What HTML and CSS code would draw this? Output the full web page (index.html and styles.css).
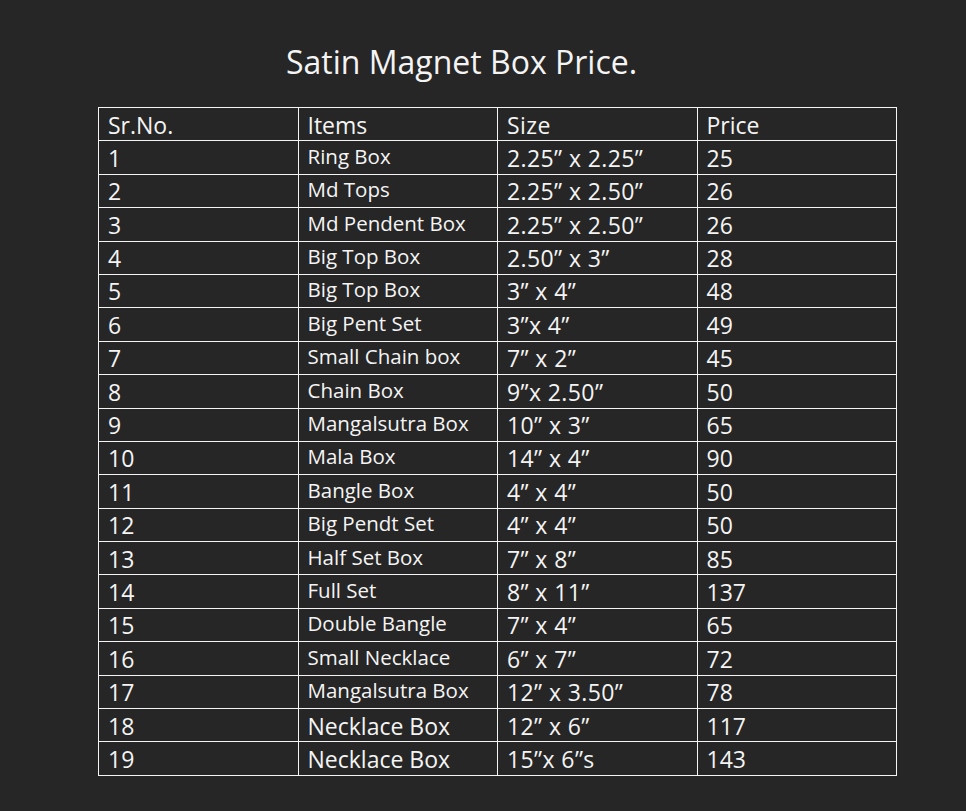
FILE: index.html
```html
<!DOCTYPE html>
<html>
<head>
<meta charset="utf-8">
<link rel="stylesheet" href="styles.css">
</head>
<body>
<h1 class="title">Satin Magnet Box Price.</h1>
<table class="price-table">
  <tr><td>Sr.No.</td><td>Items</td><td class="size">Size</td><td>Price</td></tr>
  <tr><td>1</td><td class="sm">Ring Box</td><td class="size">2.25” x 2.25”</td><td>25</td></tr>
  <tr><td>2</td><td class="sm">Md Tops</td><td class="size">2.25” x 2.50”</td><td>26</td></tr>
  <tr><td>3</td><td class="sm">Md Pendent Box</td><td class="size">2.25” x 2.50”</td><td>26</td></tr>
  <tr><td>4</td><td class="sm">Big Top Box</td><td class="size">2.50” x 3”</td><td>28</td></tr>
  <tr><td>5</td><td class="sm">Big Top Box</td><td class="size">3” x 4”</td><td>48</td></tr>
  <tr><td>6</td><td class="sm">Big Pent Set</td><td class="size">3”x 4”</td><td>49</td></tr>
  <tr><td>7</td><td class="sm">Small Chain box</td><td class="size">7” x 2”</td><td>45</td></tr>
  <tr><td>8</td><td class="sm">Chain Box</td><td class="size">9”x 2.50”</td><td>50</td></tr>
  <tr><td>9</td><td class="sm">Mangalsutra Box</td><td class="size">10” x 3”</td><td>65</td></tr>
  <tr><td>10</td><td class="sm">Mala Box</td><td class="size">14” x 4”</td><td>90</td></tr>
  <tr><td>11</td><td class="sm">Bangle Box</td><td class="size">4” x 4”</td><td>50</td></tr>
  <tr><td>12</td><td class="sm">Big Pendt Set</td><td class="size">4” x 4”</td><td>50</td></tr>
  <tr><td>13</td><td class="sm">Half Set Box</td><td class="size">7” x 8”</td><td>85</td></tr>
  <tr><td>14</td><td class="sm">Full Set</td><td class="size">8” x 11”</td><td>137</td></tr>
  <tr><td>15</td><td class="sm">Double Bangle</td><td class="size">7” x 4”</td><td>65</td></tr>
  <tr><td>16</td><td class="sm">Small Necklace</td><td class="size">6” x 7”</td><td>72</td></tr>
  <tr><td>17</td><td class="sm">Mangalsutra Box</td><td class="size">12” x 3.50”</td><td>78</td></tr>
  <tr><td>18</td><td>Necklace Box</td><td class="size">12” x 6”</td><td>117</td></tr>
  <tr><td>19</td><td>Necklace Box</td><td class="size">15”x 6”s</td><td>143</td></tr>
</table>
</body>
</html>
```
FILE: styles.css
```css
html, body {
  margin: 0;
  padding: 0;
  background: #262626;
  color: #f4f4f4;
  font-family: "Open Sans", Lato, sans-serif;
}
body {
  width: 966px;
  height: 811px;
  overflow: hidden;
}
.title {
  margin: 0;
  padding: 43px 0 0 286px;
  font-size: 32px;
  font-weight: 400;
  line-height: 38px;
  height: 63px;
  box-sizing: border-box;
  white-space: nowrap;
}
.price-table {
  margin-left: 98px;
  margin-top: 44px;
  border-collapse: collapse;
  width: 799px;
  table-layout: fixed;
}
.price-table tr {
  height: 33.4px;
}
.price-table td {
  border: 1px solid #f4f4f4;
  padding: 6.5px 0 0 9px;
  vertical-align: top;
  font-size: 23px;
  line-height: 20px;
  box-sizing: border-box;
  white-space: nowrap;
}
.price-table td.size {
  letter-spacing: 0.4px;
}
.price-table td.sm {
  font-size: 20.5px;
  padding-top: 5.5px;
  line-height: 18px;
}
```
